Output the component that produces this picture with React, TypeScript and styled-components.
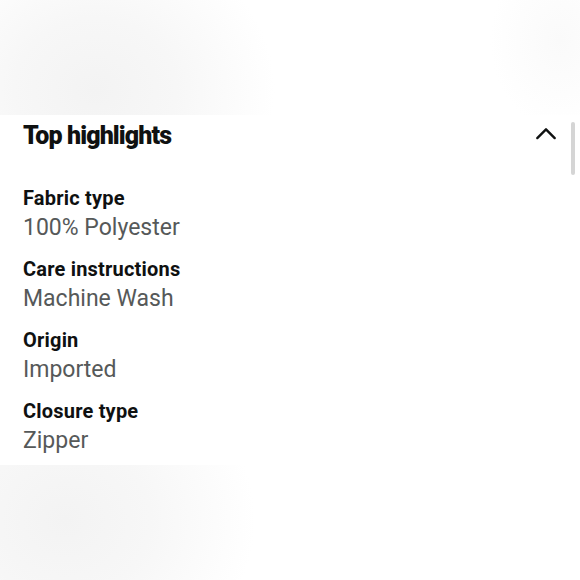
import React from "react";
import styled, { createGlobalStyle } from "styled-components";

const GlobalStyle = createGlobalStyle`
  html, body {
    margin: 0;
    padding: 0;
    background: #ffffff;
  }
  body {
    font-family: Roboto, "Liberation Sans", Arial, sans-serif;
  }
`;

const highlights = [
  { label: "Fabric type", value: "100% Polyester" },
  { label: "Care instructions", value: "Machine Wash" },
  { label: "Origin", value: "Imported" },
  { label: "Closure type", value: "Zipper" },
];

function App() {
  return (
    <>
      <GlobalStyle />
      <Page>
        <TopBand />
        <Card>
          <Header>
            <Title>Top highlights</Title>
            <Chevron viewBox="0 0 24 14" aria-hidden="true">
              <path d="M2.5 12 L12 2.5 L21.5 12" />
            </Chevron>
          </Header>
          <List>
            {highlights.map((item) => (
              <Item key={item.label}>
                <Label>{item.label}</Label>
                <Value>{item.value}</Value>
              </Item>
            ))}
          </List>
          <ScrollThumb />
        </Card>
        <BottomBand />
      </Page>
    </>
  );
}

const Page = styled.div`
  width: 580px;
  height: 580px;
  display: flex;
  flex-direction: column;
  overflow: hidden;
  background: #ffffff;
`;

const TopBand = styled.div`
  height: 115px;
  flex: none;
  background:
    radial-gradient(ellipse 180px 160px at 95px 90px, #f3f3f3 0%, #f7f7f7 45%, rgba(255,255,255,0) 100%),
    radial-gradient(ellipse 70px 90px at 560px 40px, #fafafa 0%, rgba(255,255,255,0) 100%),
    #ffffff;
`;

const BottomBand = styled.div`
  flex: 1;
  background:
    radial-gradient(ellipse 190px 170px at 65px 55px, #f3f3f3 0%, #f7f7f7 45%, rgba(255,255,255,0) 100%),
    #ffffff;
`;

const Card = styled.section`
  position: relative;
  background: #ffffff;
  padding: 0 23px 10px 23px;
  height: 350px;
  box-sizing: border-box;
  display: flex;
  flex-direction: column;
`;

const Header = styled.div`
  height: 44px;
  display: flex;
  align-items: center;
  justify-content: space-between;
`;

const Title = styled.h2`
  margin: 0;
  font-family: Roboto, "Liberation Sans", Arial, sans-serif;
  font-weight: 900;
  font-size: 25px;
  letter-spacing: -0.9px;
  color: #0f1111;
`;

const Chevron = styled.svg`
  width: 22px;
  height: 13px;
  margin-top: -4px;
  fill: none;
  stroke: #0f1111;
  stroke-width: 2.6;
  stroke-linecap: round;
  stroke-linejoin: round;
`;

const List = styled.div`
  margin-top: 27px;
  display: flex;
  flex-direction: column;
  gap: 12px;
`;

const Item = styled.div`
  display: flex;
  flex-direction: column;
`;

const Label = styled.div`
  font-weight: 700;
  font-size: 20px;
  line-height: 30px;
  letter-spacing: 0.2px;
  color: #0f1111;
`;

const Value = styled.div`
  font-weight: 400;
  font-size: 23px;
  line-height: 29px;
  color: #565959;
`;

const ScrollThumb = styled.div`
  position: absolute;
  top: 7px;
  right: 5px;
  width: 4px;
  height: 53px;
  border-radius: 2px;
  background: #d5d5d5;
`;

export default App;
